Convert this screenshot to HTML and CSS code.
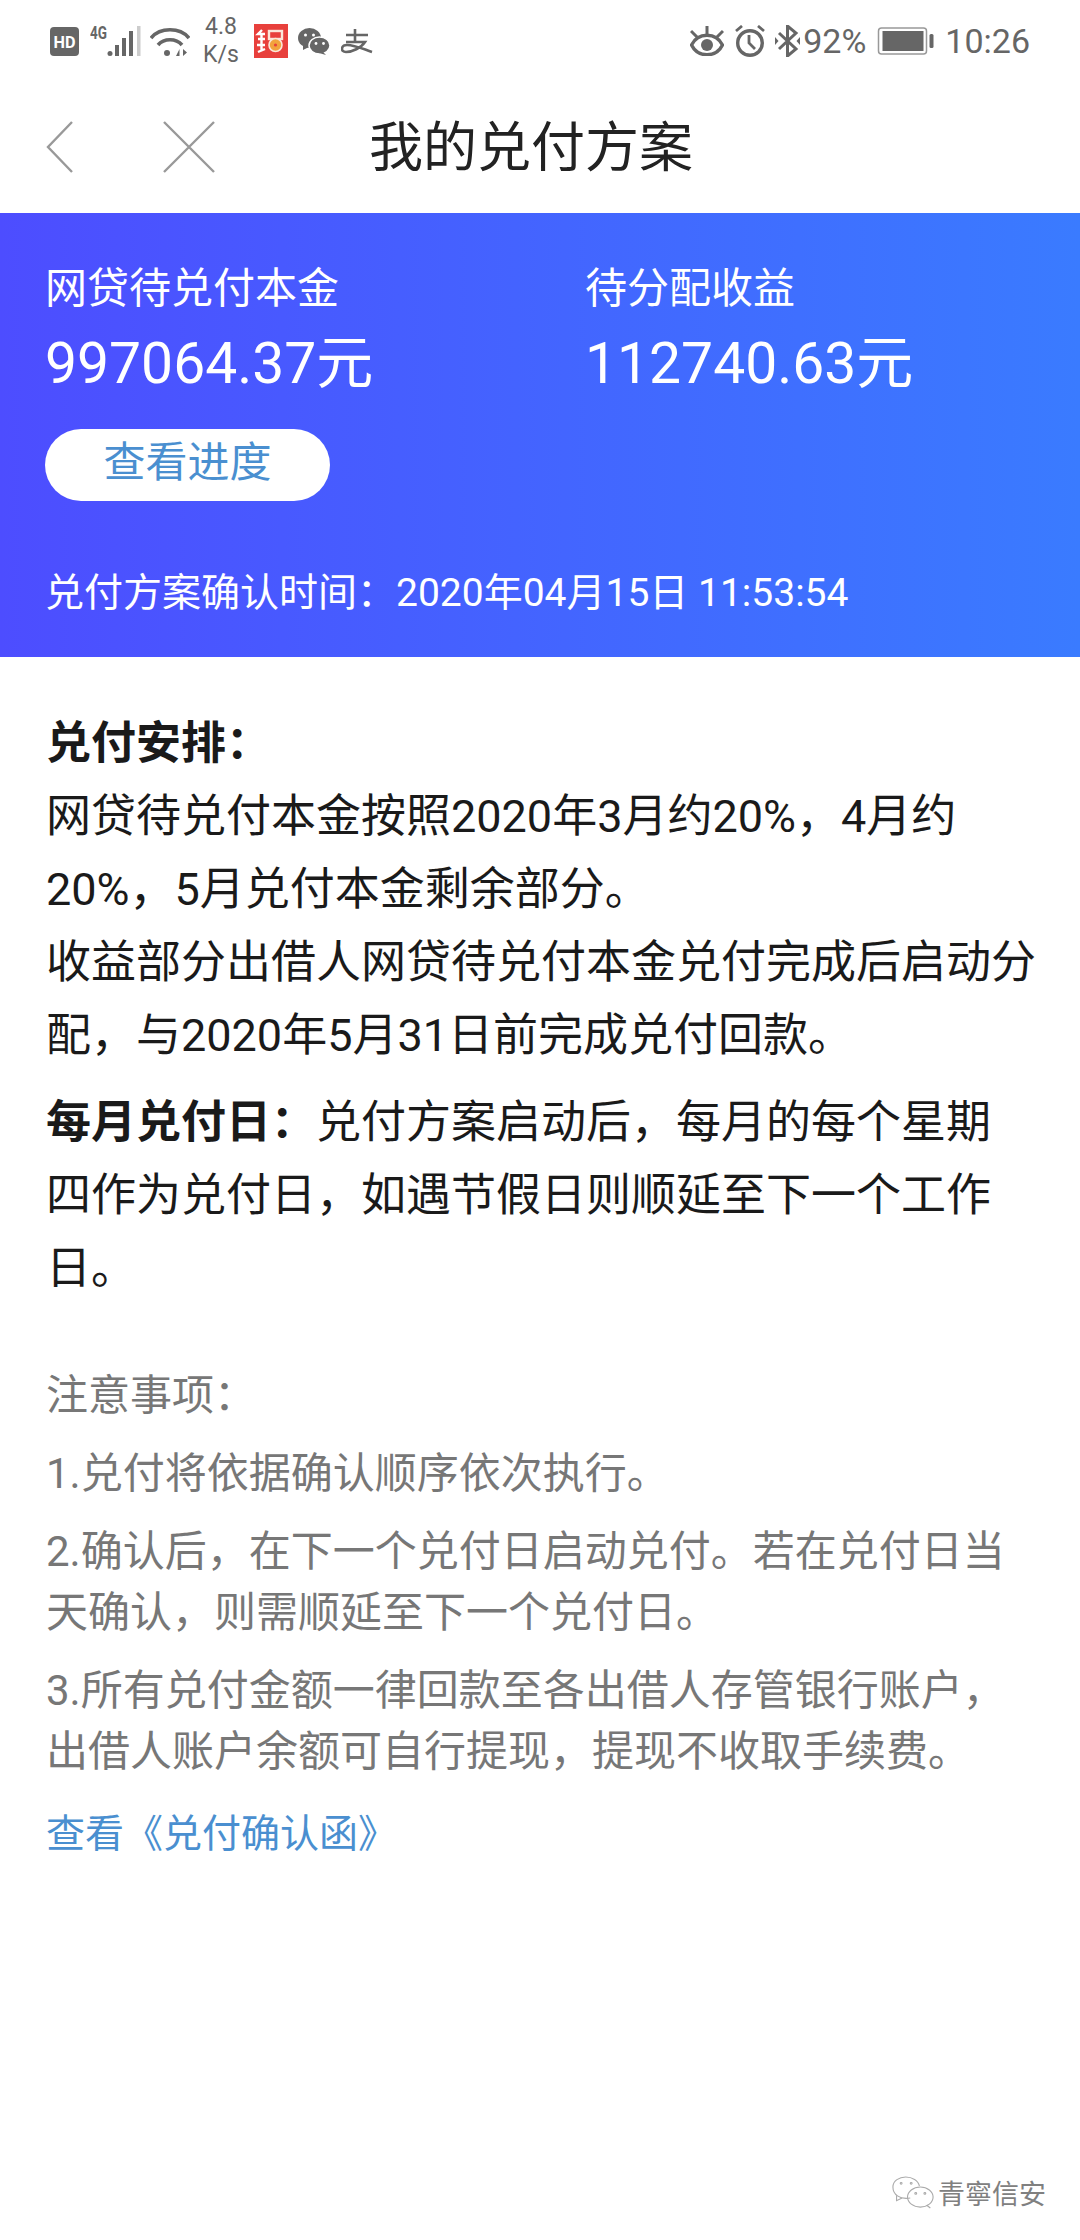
FILE: index.html
```html
<!doctype html>
<html>
<head>
	<meta charset="utf-8">
	<title>我的兑付方案</title>
	<link rel="stylesheet" href="styles.css">
</head>

<body>
	<div class="status">
		<div class="status-left">
			<svg width="29" height="29" viewBox="0 0 29 29"><rect width="29" height="29" rx="4" fill="#666"/><text x="3.5" y="20.5" textLength="22" lengthAdjust="spacingAndGlyphs" class="hd-text">HD</text></svg>
			<svg class="ico-signal" width="51" height="41" viewBox="0 -5 51 41">
				<text x="0" y="13" textLength="17" lengthAdjust="spacingAndGlyphs" class="g-text">4G</text>
				<circle cx="20" cy="27.5" r="2.5" fill="#666"/>
				<rect x="25" y="19" width="4" height="11" fill="#666"/>
				<rect x="32" y="12" width="4" height="18" fill="#666"/>
				<rect x="39" y="5" width="4" height="25" fill="#666"/>
				<rect x="47" y="0" width="3.5" height="30" fill="#ccc"/>
			</svg>
			<svg class="ico-wifi" width="40" height="31" viewBox="0 0 40 31" fill="none" stroke="#666" stroke-width="3.6">
				<path d="M1 12C10 1 30 1 39 12"/>
				<path d="M8 19C14 12 26 12 32 19"/>
				<circle cx="17" cy="27" r="3" fill="#666" stroke="none"/>
				<path d="M26 30l3.5-7v7zM33 23v7l4-3.5z" fill="#666" stroke="none"/>
			</svg>
			<div class="speed"><span>4.8</span><span>K/s</span></div>
			<svg class="ico-app" width="34" height="34" viewBox="0 0 34 34">
				<rect width="34" height="34" fill="#e8403c"/>
				<path d="M8 6L4 10H11M4 15H11M3 21H11M7.5 10V27M4 28L11 25" stroke="#fff" stroke-width="2.4" fill="none"/>
				<rect x="15" y="7" width="13" height="8" fill="none" stroke="#fbe6da" stroke-width="2.4"/>
				<circle cx="21.5" cy="21" r="6.5" fill="#f2a33c" stroke="#fbe6da" stroke-width="1.6"/>
				<circle cx="21.5" cy="21" r="1.6" fill="#e8403c"/>
			</svg>
			<svg class="ico-wechat" width="32" height="27" viewBox="0 0 32 27">
				<ellipse cx="11.5" cy="10" rx="11.5" ry="10" fill="#666"/>
				<path d="M5 17l0 5 6-3z" fill="#666"/>
				<ellipse cx="21.5" cy="17.5" rx="10.5" ry="8.5" fill="#666" stroke="#fff" stroke-width="1.5"/>
				<path d="M25 24l3 3-7-2z" fill="#666"/>
				<circle cx="7.5" cy="7" r="1.5" fill="#fff"/>
				<circle cx="15.5" cy="7" r="1.5" fill="#fff"/>
				<circle cx="18" cy="15.5" r="1.4" fill="#fff"/>
				<circle cx="25.5" cy="15.5" r="1.4" fill="#fff"/>
			</svg>
			<svg class="ico-ali" width="32" height="25" viewBox="0 0 32 25" fill="none" stroke="#666" stroke-width="2.6">
				<path d="M5 6H27M14 0V13M5 13H24C20 19 11 23 5 23C-1 23 0 16 6 16C14 16 22 20 31 23"/>
			</svg>
		</div>
		<div class="status-right">
			<svg width="34" height="30" viewBox="0 0 34 30" fill="none" stroke="#666">
				<path d="M1.5 19C8 6 26 6 32.5 19C26 32 8 32 1.5 19Z" stroke-width="3.4"/>
				<circle cx="17" cy="19" r="6" fill="#666" stroke="none"/>
				<path d="M17 9V0M7 11L1 5M27 11L33 5" stroke-width="3"/>
			</svg>
			<svg class="ico-clock" width="30" height="32" viewBox="0 0 30 32" fill="none" stroke="#666" stroke-width="3.4">
				<circle cx="15" cy="18" r="12.3"/>
				<path d="M14 10V18L20 24" stroke-width="2.8"/>
				<path d="M1 6L7 1M29 6L23 1" stroke-width="2.8"/>
			</svg>
			<svg class="ico-bt" width="25" height="32" viewBox="0 0 25 32" fill="#666" stroke="none">
				<path d="M4 8L21 24L12.5 31V1L21 8L4 24" fill="none" stroke="#666" stroke-width="3"/>
				<path d="M0 12l3.5 4-3.5 4zM25 12l-3.5 4 3.5 4z"/>
			</svg>
			<span class="pct">92%</span>
			<svg class="ico-batt" width="57" height="28" viewBox="0 0 56 28">
				<rect x="1" y="1" width="48" height="26" rx="3" fill="none" stroke="#999" stroke-width="1.5"/>
				<rect x="5" y="4" width="41" height="20" fill="#666"/>
				<rect x="52" y="7" width="4" height="14" rx="1.5" fill="#666"/>
			</svg>
			<span class="clock">10:26</span>
		</div>
	</div>

	<div class="nav">
		<svg class="nav-back" width="28" height="52" viewBox="0 0 28 52" fill="none" stroke="#999" stroke-width="2.4"><path d="M26 1L2 26L26 51"/></svg>
		<svg class="nav-close" width="52" height="52" viewBox="0 0 52 52" fill="none" stroke="#999" stroke-width="2.4"><path d="M1 1L51 51M51 1L1 51"/></svg>
		<div class="nav-title">我的兑付方案</div>
	</div>

	<div class="banner">
		<div class="amounts">
			<div class="amount">
				<div class="amount-label">网贷待兑付本金</div>
				<div class="amount-value">997064.37元</div>
			</div>
			<div class="amount">
				<div class="amount-label">待分配收益</div>
				<div class="amount-value">112740.63元</div>
			</div>
		</div>
		<div class="progress-btn">查看进度</div>
		<div class="confirm-time">兑付方案确认时间：2020年04月15日 11:53:54</div>
	</div>

	<div class="content">
		<div class="plan">
			<p><b>兑付安排：</b><br>网贷待兑付本金按照2020年3月约20%，4月约20%，5月兑付本金剩余部分。<br>收益部分出借人网贷待兑付本金兑付完成后启动分配，与2020年5月31日前完成兑付回款。</p>
			<p class="plan-day"><b>每月兑付日：</b>兑付方案启动后，每月的每个星期<br>四作为兑付日，如遇节假日则顺延至下一个工作日。</p>
		</div>
		<div class="notes">
			<p>注意事项：</p>
			<p>1.兑付将依据确认顺序依次执行。</p>
			<p>2.确认后，在下一个兑付日启动兑付。若在兑付日当天确认，则需顺延至下一个兑付日。</p>
			<p>3.所有兑付金额一律回款至各出借人存管银行账户，出借人账户余额可自行提现，提现不收取手续费。</p>
			<p class="link">查看《兑付确认函》</p>
		</div>
	</div>

	<div class="watermark">
		<svg width="42" height="33" viewBox="0 0 46 36" fill="none" stroke="#aaa" stroke-width="1.2">
			<path d="M20 24C8 26 1 20 1 12C1 5 8 1 15 1C22 1 29 5 30 11"/>
			<path d="M5 21L5 27L11 24"/>
			<ellipse cx="31" cy="23" rx="14" ry="11"/>
			<path d="M38 32L42 35"/>
			<circle cx="10" cy="8" r="1"/>
			<circle cx="21" cy="8" r="1"/>
			<circle cx="26" cy="19" r="1"/>
			<circle cx="36" cy="19" r="1"/>
		</svg>
		<span>青寧信安</span>
	</div>
</body>
</html>
```

FILE: styles.css
```css
html{
	background: #fff;
}
body{
	margin: 0;
	width: 1080px;
	height: 2240px;
	position: relative;
	overflow: hidden;
	font-family: Roboto, "Noto Sans CJK SC", sans-serif;
	color: #222;
}
p{
	margin: 0;
}
.status{
	height: 70px;
	padding: 12px 50px 0 50px;
	box-sizing: border-box;
	display: flex;
	justify-content: space-between;
	align-items: center;
	color: #666;
}
.status-left,.status-right{
	display: flex;
	align-items: center;
}
.hd-text{
	font: bold 17px Roboto, sans-serif;
	fill: #fff;
}
.g-text{
	font: bold 18px Roboto, sans-serif;
	fill: #666;
}
.ico-signal{
	margin-left: 11px;
}
.ico-wifi{
	margin-left: 9px;
}
.speed{
	display: flex;
	flex-direction: column;
	margin-left: 14px;
	width: 34px;
	font-size: 23px;
	line-height: 28px;
	align-items: center;
}
.ico-app{
	margin-left: 16px;
}
.ico-wechat{
	margin-left: 10px;
}
.ico-ali{
	margin-left: 11px;
}
.ico-clock{
	margin-left: 11px;
}
.ico-bt{
	margin-left: 10px;
}
.pct{
	font-size: 34px;
	margin-left: 3px;
}
.ico-batt{
	margin-left: 11px;
}
.clock{
	font-size: 34px;
	margin-left: 11px;
}
.nav{
	height: 143px;
	box-sizing: border-box;
	padding: 4px 0 0 46px;
	display: flex;
	align-items: center;
}
.nav-back,.nav-close{
	margin-top: 6px;
}
.nav-close{
	margin-left: 89px;
}
.nav-title{
	font-size: 54px;
	margin-left: 154px;
}
.banner{
	height: 444px;
	box-sizing: border-box;
	background: linear-gradient(90deg, #4d4dff 0%, #3a7bff 100%);
	padding: 46px 0 0 45px;
	color: #fff;
}
.amounts{
	display: flex;
}
.amount{
	flex: none;
	width: 540px;
}
.amount-label{
	font-size: 42px;
	line-height: 60px;
}
.amount-value{
	font-size: 57px;
	line-height: 90px;
}
.progress-btn{
	width: 285px;
	height: 72px;
	margin-top: 20px;
	background: #fff;
	border-radius: 36px;
	color: #4a8fd0;
	font-size: 42px;
	line-height: 68px;
	text-align: center;
}
.confirm-time{
	font-size: 39px;
	line-height: 50px;
	margin-top: 67px;
}
.content{
	padding: 50px 40px 0 46px;
}
.plan{
	font-size: 45px;
	line-height: 73px;
	color: #1a1a1a;
}
.plan-day{
	margin-top: 14px;
}
.notes{
	margin-top: 60px;
	font-size: 42px;
	line-height: 61px;
	color: #777;
}
.notes p{
	margin-bottom: 17px;
}
.notes .link{
	color: #4a8fd0;
	font-size: 39px;
	margin-top: 22px;
}
.watermark{
	position: absolute;
	right: 34px;
	bottom: 28px;
	display: flex;
	align-items: center;
	gap: 4px;
	font-size: 27px;
	color: #808080;
}
```
